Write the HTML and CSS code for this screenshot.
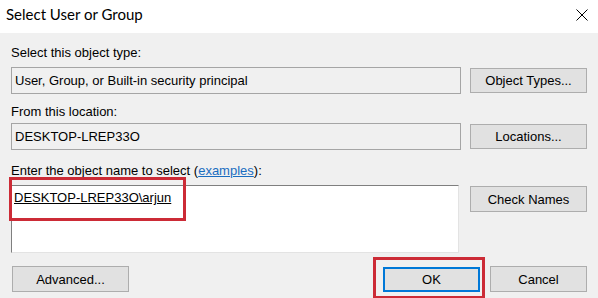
FILE: index.html
```html
<!DOCTYPE html>
<html lang="en">
<head>
    <meta charset="UTF-8">
    <title>Select User or Group</title>
    <link rel="stylesheet" href="styles.css">
</head>
<body>
    <!-- TITLE BAR -->
    <div class="titlebar">
        <span class="title">Select User or Group</span>
        <svg class="close" width="12" height="12" viewBox="0 0 12 12">
            <path d="M0.5 0.5 L11.5 11.5 M11.5 0.5 L0.5 11.5" stroke="#000" stroke-width="1" fill="none"/>
        </svg>
    </div>

    <!-- DIALOG BODY -->
    <div class="content">
        <div class="label label-type">Select this object type:</div>
        <div class="row row-type">
            <div class="field">User, Group, or Built-in security principal</div>
            <button class="btn">Object Types...</button>
        </div>

        <div class="label label-location">From this location:</div>
        <div class="row row-location">
            <div class="field">DESKTOP-LREP33O</div>
            <button class="btn">Locations...</button>
        </div>

        <div class="label label-names">Enter the object name to select (<a href="#">examples</a>):</div>
        <div class="row row-names">
            <div class="names">
                <span class="name">DESKTOP-LREP33O\arjun</span>
                <div class="mark mark-names"></div>
            </div>
            <button class="btn btn-check">Check Names</button>
        </div>

        <div class="footer">
            <button class="btn btn-advanced">Advanced...</button>
            <div class="actions">
                <div class="ok-wrap">
                    <button class="btn btn-ok">OK</button>
                    <div class="mark mark-ok"></div>
                </div>
                <button class="btn btn-cancel">Cancel</button>
            </div>
        </div>
    </div>
</body>
</html>
```

FILE: styles.css
```css
/* === GENERAL === */
body {
    margin: 0;
    font-family: 'Liberation Sans', Arial, sans-serif;
    font-size: 13px;
    color: #000;
    background-color: #f0f0f0;
    height: 298px;
    overflow: hidden;
}

/* === TITLE BAR === */
.titlebar {
    height: 33px;
    background-color: #fff;
    display: flex;
    align-items: flex-start;
    justify-content: space-between;
    padding: 0 10px 0 6px;
    box-sizing: border-box;
}

.title {
    font-family: 'Lato', 'Liberation Sans', sans-serif;
    font-size: 15px;
    line-height: 18px;
    margin-top: 5px;
}

.close {
    margin-top: 9px;
}

/* === CONTENT === */
.content {
    padding: 12px 11px 0 11px;
}

.label {
    line-height: 15px;
}

.label a {
    color: #1a6dc0;
}

.label-location {
    margin-top: 10px;
}

.label-names {
    margin-top: 13px;
}

.row {
    display: flex;
    align-items: center;
    gap: 9px;
}

.row-type {
    margin-top: 7px;
}

.row-location {
    margin-top: 4px;
}

.row-names {
    margin-top: 7px;
    align-items: flex-start;
}

.field {
    flex: 1;
    height: 27px;
    box-sizing: border-box;
    border: 1px solid #a5a5a5;
    padding: 0 3px;
    line-height: 25px;
    background-color: #f0f0f0;
}

.names {
    position: relative;
    width: 448px;
    height: 68px;
    box-sizing: border-box;
    margin-right: 2px;
    padding: 4px 0 0 2px;
    line-height: 15px;
    background-color: #fff;
    border-top: 1px solid #7f7f7f;
    border-left: 1px solid #7f7f7f;
    border-right: 1px solid #e3e3e3;
    border-bottom: 1px solid #e3e3e3;
}

.name {
    text-decoration: underline;
}

/* === BUTTONS === */
.btn {
    width: 117px;
    height: 25px;
    padding: 0;
    font-family: inherit;
    font-size: 13px;
    color: #000;
    background-color: #e1e1e1;
    border: 1px solid #adadad;
}

.btn-check {
    height: 26px;
    margin-top: 1px;
}

.footer {
    display: flex;
    justify-content: space-between;
    margin-top: 13px;
}

.btn-advanced {
    height: 26px;
    margin-left: 1px;
}

.actions {
    display: flex;
    gap: 10px;
}

.ok-wrap {
    position: relative;
}

.btn-ok {
    width: 97px;
    height: 25px;
    margin-top: 1px;
    border: 2px solid #0078d7;
}

.btn-cancel {
    width: 97px;
    height: 26px;
}

/* === ANNOTATIONS === */
.mark {
    position: absolute;
    border: 3px solid #cc2b36;
    box-sizing: border-box;
}

.mark-names {
    left: -3px;
    top: -9px;
    width: 177px;
    height: 44px;
}

.mark-ok {
    left: -10px;
    top: -9px;
    width: 112px;
    height: 42px;
}
```
